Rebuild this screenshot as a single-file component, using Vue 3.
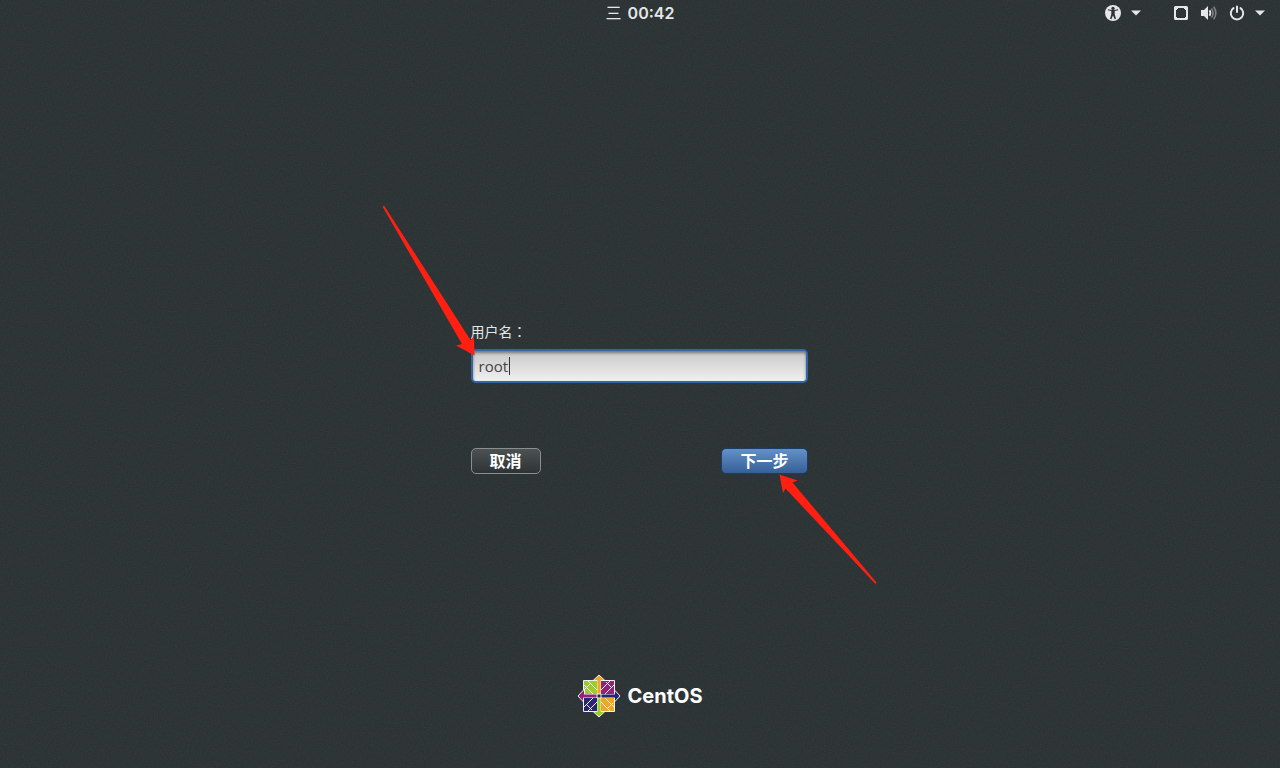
<script setup>
import { ref } from 'vue'

const username = ref('root')
const quadrants = [
  { turn: 0, square: '#9ccd2a', arrow: '#efa724' },
  { turn: 90, square: '#932279', arrow: '#262577' },
  { turn: 180, square: '#efa724', arrow: '#9ccd2a' },
  { turn: 270, square: '#262577', arrow: '#932279' }
]
</script>

<template>
  <div class="screen">
    <svg class="grain" aria-hidden="true">
      <filter id="grain">
        <feTurbulence type="fractalNoise" baseFrequency="0.7" numOctaves="2" seed="4" />
        <feColorMatrix type="saturate" values="0" />
      </filter>
      <rect width="100%" height="100%" filter="url(#grain)" />
    </svg>

    <header class="panel">
      <button class="clock" type="button"><span class="day">三</span><span>00:42</span></button>
      <div class="status">
        <button type="button" class="menu" aria-label="Accessibility">
          <svg width="16" height="16" viewBox="0 0 16 16">
            <circle cx="8" cy="8" r="8" fill="#e6e6e6" />
            <circle cx="8" cy="3.4" r="1.7" fill="#2e3436" />
            <path d="M2.8 5.300 6.300 6v3.200L5 13.800l1.300.4L8 10.400l1.700 3.800 1.300-.4-1.300-4.600V6l3.500-.7-.2-1.100L9.500 5h-3L3 4.200z" fill="#2e3436" />
          </svg>
          <svg width="10" height="6" viewBox="0 0 10 6"><path d="M0 .5h10L5 5.500z" fill="#e6e6e6" /></svg>
        </button>
        <button type="button" class="menu" aria-label="System">
          <span class="indicators">
            <svg width="16" height="16" viewBox="0 0 16 16">
              <path fill="#e6e6e6" fill-rule="evenodd" d="M2.500 1h11Q15 1 15 2.500v11q0 1.500-1.500 1.500h-11Q1 15 1 13.500v-11Q1 1 2.500 1zM5 3v1H4v1H3v7h1v1h8v-1h1V5h-1V4h-1V3z" />
            </svg>
            <svg width="16" height="16" viewBox="0 0 16 16">
              <path d="M0 5h3l4-4v14l-4-4H0z" fill="#e6e6e6" />
              <path d="M8.500 5.300q1.800 2.700 0 5.400" fill="none" stroke="#e6e6e6" stroke-width="1.800" />
              <path d="M10.500 3.500q3.200 4.500 0 9M12.700 1.800q4.300 6.200 0 12.400" fill="none" stroke="#7c8081" stroke-width="1.600" />
            </svg>
            <svg width="16" height="16" viewBox="0 0 16 16" fill="none" stroke="#e6e6e6" stroke-width="2" stroke-linecap="round">
              <path d="M4.500 3.100a6.200 6.200 0 1 0 7 0M8 1.500v5.500" />
            </svg>
          </span>
          <svg width="10" height="6" viewBox="0 0 10 6"><path d="M0 .5h10L5 5.500z" fill="#e6e6e6" /></svg>
        </button>
      </div>
    </header>

    <main class="content">
      <form class="login" @submit.prevent>
        <label for="username">用户名<span class="colon">：</span></label>
        <div class="field">
          <input id="username" v-model="username" type="text" autocomplete="off" />
          <span class="caret"></span>
        </div>
        <div class="actions">
          <button class="cancel" type="button">取消</button>
          <button class="next" type="submit">下一步</button>
        </div>
        <svg class="pointer to-field" width="94" height="151" viewBox="0 0 94 151" aria-hidden="true">
          <path d="M.5 1.500 2 .5 88.500 135 92 132 92.500 150.500 74 140.500 80 139z" />
        </svg>
        <svg class="pointer to-next" width="98" height="110" viewBox="0 0 98 110" aria-hidden="true">
          <path d="M.5.500 18.500 6.500 13.500 8.500 97.500 108.500 96.500 110 6.500 14.500 4 19z" />
        </svg>
      </form>
    </main>

    <footer class="brand">
      <svg width="44" height="44" viewBox="-22 -22 44 44" aria-hidden="true">
        <g v-for="q in quadrants" :key="q.turn" :transform="`rotate(${q.turn})`" stroke="#f0f0f0">
          <path d="M0-21 7-14.500H-7z" :fill="q.arrow" />
          <path d="M-15.500-15.500H-1.500V-1.500H-15.500z" :fill="q.square" />
          <path d="M-1.500-5.500-11-15M-5.500-1.500-15-11M-14-7-9-12" fill="none" />
        </g>
        <path
          v-for="q in quadrants" :key="'shaft' + q.turn" :transform="`rotate(${q.turn})`"
          d="M0-19.500 3-16.500H1.500V-2H-1.500V-16.500H-3z" :fill="q.arrow"
        />
        <path d="M-2-2H2V2H-2z" fill="#262c33" stroke="#f0f0f0" />
      </svg>
      <span>CentOS</span>
    </footer>
  </div>
</template>

<style>
body {
  margin: 0;
  background: #2b3133;
}
</style>

<style scoped>
.screen {
  position: relative;
  display: flex;
  flex-direction: column;
  min-height: 100vh;
  background: #293032;
  color: #e6e6e6;
  font-family: "Open Sans", "Noto Sans CJK SC", sans-serif;
  font-size: 15px;
}
.grain {
  position: absolute;
  inset: 0;
  width: 100%;
  height: 100%;
  opacity: 0.07;
  pointer-events: none;
}
svg {
  display: block;
}
button {
  font-family: inherit;
  color: inherit;
  cursor: pointer;
}
.panel {
  position: relative;
  display: grid;
  grid-template-columns: 1fr auto 1fr;
  align-items: center;
  height: 26px;
}
.clock {
  grid-column: 2;
  display: flex;
  align-items: center;
  gap: 6px;
  padding: 0;
  border: 0;
  background: none;
  font-family: Inter, "Noto Sans CJK SC", sans-serif;
  font-size: 16px;
  font-weight: 600;
  line-height: 24px;
}
.day {
  font-weight: 400;
}
.status {
  display: flex;
  justify-content: flex-end;
  gap: 32px;
  padding-right: 15px;
}
.menu {
  display: flex;
  align-items: center;
  gap: 10px;
  padding: 0;
  border: 0;
  background: none;
}
.indicators {
  display: flex;
  gap: 12px;
}
.content {
  position: relative;
  flex: 1;
  display: flex;
  align-items: center;
  justify-content: center;
  padding: 94px 2px 0 0;
}
.login {
  position: relative;
  width: 337px;
}
label {
  display: block;
  margin-bottom: 7px;
  font-size: 14px;
  line-height: 20px;
}
.colon {
  font-family: "Noto Sans CJK TC", sans-serif;
}
.field {
  position: relative;
}
input {
  display: block;
  box-sizing: border-box;
  width: 100%;
  height: 34px;
  padding: 0 6px;
  border: 2px solid #3465a4;
  border-radius: 5px;
  outline: 0;
  background: linear-gradient(#c8c8c8, #f0f0f0);
  box-shadow: inset 0 2px 3px #777;
  color: #444;
  font-family: "Open Sans", sans-serif;
  font-size: 15px;
  caret-color: transparent;
}
.caret {
  position: absolute;
  top: 8px;
  left: 38px;
  width: 1px;
  height: 18px;
  background: #333;
}
.actions {
  display: flex;
  justify-content: space-between;
  margin-top: 65px;
}
.actions button {
  height: 26px;
  padding: 0 18px;
  border: 1px solid #8b8e8f;
  border-radius: 5px;
  background: linear-gradient(#4c5152, #2e3436);
  color: #fff;
  font-size: 16px;
  font-weight: 700;
  line-height: 22px;
}
.actions .next {
  border-color: #1c3d69;
  background: linear-gradient(#6391c8, #365f97);
}
.pointer {
  position: absolute;
  fill: #ff2012;
  pointer-events: none;
}
.to-field {
  top: -116px;
  left: -89px;
}
.to-next {
  top: 153px;
  left: 308px;
}
.brand {
  position: relative;
  display: flex;
  align-items: center;
  justify-content: center;
  gap: 7px;
  margin-bottom: 50px;
  padding-right: 1px;
  color: #fff;
  font-family: Inter, sans-serif;
  font-size: 20px;
  font-weight: 700;
  line-height: 28px;
}
</style>
